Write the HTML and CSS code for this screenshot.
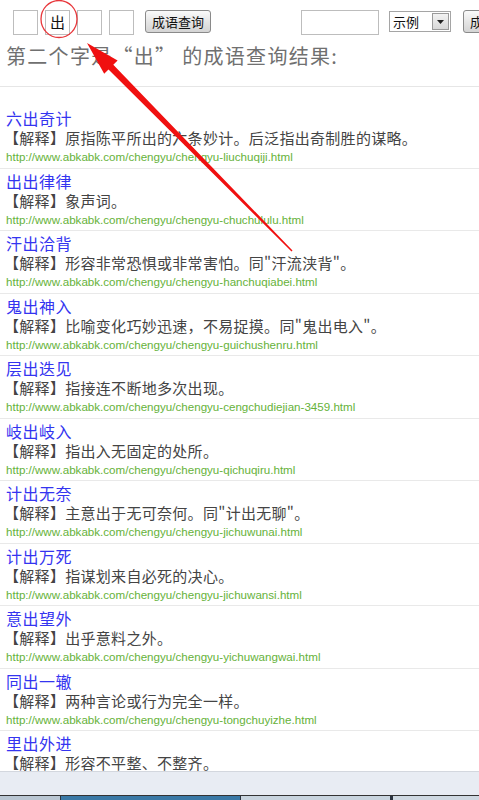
FILE: index.html
```html
<!DOCTYPE html>
<html lang="zh-CN">
<head>
<meta charset="utf-8">
<title>成语查询</title>
<link rel="stylesheet" href="styles.css">
</head>
<body>
<div class="page">
  <div class="toolbar">
    <div class="boxes">
      <span class="cell"></span>
      <span class="cell">出</span>
      <span class="cell"></span>
      <span class="cell"></span>
    </div>
    <span class="btn">成语查询</span>
    <span class="search"></span>
    <span class="select"><span class="sel-text">示例</span><span class="sel-arrow"><svg width="7" height="4" viewBox="0 0 7 4"><path d="M0 0H7L3.5 4Z" fill="#222"/></svg></span></span>
    <span class="btn btn-cut">成语查询</span>
  </div>
  <h1 class="heading">第二个字是“出” 的成语查询结果:</h1>
  <div class="rule"></div>
  <ul class="list">
    <li class="item"><a class="title">六出奇计</a><p class="desc">【解释】原指陈平所出的六条妙计。后泛指出奇制胜的谋略。</p><p class="url">http://www.abkabk.com/chengyu/chengyu-liuchuqiji.html</p></li>
    <li class="item"><a class="title">出出律律</a><p class="desc">【解释】象声词。</p><p class="url">http://www.abkabk.com/chengyu/chengyu-chuchululu.html</p></li>
    <li class="item"><a class="title">汗出洽背</a><p class="desc">【解释】形容非常恐惧或非常害怕。同"汗流浃背"。</p><p class="url">http://www.abkabk.com/chengyu/chengyu-hanchuqiabei.html</p></li>
    <li class="item"><a class="title">鬼出神入</a><p class="desc">【解释】比喻变化巧妙迅速，不易捉摸。同"鬼出电入"。</p><p class="url">http://www.abkabk.com/chengyu/chengyu-guichushenru.html</p></li>
    <li class="item"><a class="title">层出迭见</a><p class="desc">【解释】指接连不断地多次出现。</p><p class="url">http://www.abkabk.com/chengyu/chengyu-cengchudiejian-3459.html</p></li>
    <li class="item"><a class="title">岐出岐入</a><p class="desc">【解释】指出入无固定的处所。</p><p class="url">http://www.abkabk.com/chengyu/chengyu-qichuqiru.html</p></li>
    <li class="item"><a class="title">计出无奈</a><p class="desc">【解释】主意出于无可奈何。同"计出无聊"。</p><p class="url">http://www.abkabk.com/chengyu/chengyu-jichuwunai.html</p></li>
    <li class="item"><a class="title">计出万死</a><p class="desc">【解释】指谋划来自必死的决心。</p><p class="url">http://www.abkabk.com/chengyu/chengyu-jichuwansi.html</p></li>
    <li class="item"><a class="title">意出望外</a><p class="desc">【解释】出乎意料之外。</p><p class="url">http://www.abkabk.com/chengyu/chengyu-yichuwangwai.html</p></li>
    <li class="item"><a class="title">同出一辙</a><p class="desc">【解释】两种言论或行为完全一样。</p><p class="url">http://www.abkabk.com/chengyu/chengyu-tongchuyizhe.html</p></li>
    <li class="item"><a class="title">里出外进</a><p class="desc">【解释】形容不平整、不整齐。</p><p class="url">http://www.abkabk.com/chengyu/chengyu-lichuwaijin.html</p></li>
  </ul>

  <svg class="annot" width="479" height="300" viewBox="0 0 479 300">
    <ellipse cx="59" cy="19" rx="18" ry="18.5" fill="none" stroke="#e8363a" stroke-width="1.3"/>
    <polygon points="87,43 117.6,60.6 113.3,64.8 292.5,250.5 291.5,251.5 108.5,69.6 104.2,73.8" fill="#f01010"/>
  </svg>
</div>
<div class="statusbar"></div>
<div class="taskbar">
  <span class="task t1"></span>
  <span class="task t2"></span>
  <span class="task t3"></span>
  <span class="task t4"></span>
</div>
</body>
</html>
```
FILE: styles.css
```css
html, body {
  margin: 0;
  padding: 0;
  overflow: hidden;
  background: #fff;
}
body {
  font-family: "Noto Sans CJK SC", "Liberation Sans", sans-serif;
  width: 479px;
  height: 800px;
}
.page {
  position: relative;
  width: 479px;
}
.toolbar {
  display: flex;
  align-items: flex-start;
  padding: 10px 0 0 13px;
  height: 25px;
  white-space: nowrap;
}
.boxes {
  display: flex;
  gap: 7px;
}
.cell {
  box-sizing: border-box;
  width: 25px;
  height: 25px;
  border: 1px solid #bdbdbd;
  font-size: 15px;
  line-height: 22px;
  text-align: center;
  color: #111;
  flex: none;
}
.btn {
  box-sizing: border-box;
  flex: none;
  margin-left: 11px;
  height: 23px;
  padding: 0 6px;
  border: 1px solid #8a8a8a;
  border-radius: 3px;
  background: linear-gradient(#fafafa, #e6e6e6 50%, #d4d4d4);
  font-size: 13px;
  line-height: 21px;
  color: #111;
}
.search {
  box-sizing: border-box;
  flex: none;
  margin-left: 90px;
  width: 78px;
  height: 25px;
  border: 1px solid #bdbdbd;
}
.select {
  box-sizing: border-box;
  flex: none;
  display: flex;
  align-items: center;
  margin: 1px 0 0 10px;
  width: 62px;
  height: 21px;
  border: 1px solid #a5a5a5;
  padding-left: 3px;
}
.sel-text {
  flex: 1;
  font-size: 13px;
  line-height: 19px;
  color: #111;
}
.sel-arrow {
  box-sizing: border-box;
  width: 17px;
  height: 17px;
  margin-right: 1px;
  border: 1px solid #9a9a9a;
  background: linear-gradient(#f2f2f2, #d8d8d8);
  display: flex;
  align-items: center;
  justify-content: center;
}
.btn-cut {
  margin-left: 12px;
}
.heading {
  margin: 9px 0 0 6px;
  font-size: 20px;
  font-weight: normal;
  line-height: 24px;
  letter-spacing: 1.3px;
  color: #707070;
  white-space: nowrap;
}
.rule {
  margin-top: 18px;
  height: 1px;
  background: #e6e6e6;
}
.list {
  list-style: none;
  margin: 19px 0 0 0;
  padding: 0;
}
.item {
  padding: 2px 0 2px 0;
  border-bottom: 1px solid #e9e9e9;
}
.title {
  display: block;
  margin-left: 6px;
  font-size: 16px;
  line-height: 20px;
  color: #3434f0;
  letter-spacing: 0.5px;
  text-decoration: none;
}
.desc {
  margin: 0 0 0 4px;
  font-size: 15px;
  line-height: 20px;
  letter-spacing: 0.3px;
  color: #444;
  white-space: nowrap;
}
.url {
  margin: 0 0 0 6px;
  font-family: "Liberation Sans", Arial, sans-serif;
  font-size: 11.6px;
  line-height: 17.5px;
  color: #66b23a;
  white-space: nowrap;
}
.annot {
  position: absolute;
  left: 0;
  top: 0;
  pointer-events: none;
}
.statusbar {
  position: fixed;
  left: 0;
  top: 771px;
  width: 479px;
  height: 24px;
  background: #e8ecf3;
  border-top: 1px solid #d3d7de;
  box-sizing: border-box;
}
.taskbar {
  position: fixed;
  left: 0;
  top: 795px;
  width: 479px;
  height: 5px;
  display: flex;
  gap: 1px;
  background: #2c3440;
  border-top: 1px solid #333;
  box-sizing: border-box;
}
.task { height: 4px; }
.t1 { width: 60px; background: #b9c6d2; }
.t2 { width: 179px; background: #3a79a6; }
.t3 { width: 149px; background: #c8d4de; }
.t4 { flex: 1; margin-left: 2px; background: #ced8e1; }
```
